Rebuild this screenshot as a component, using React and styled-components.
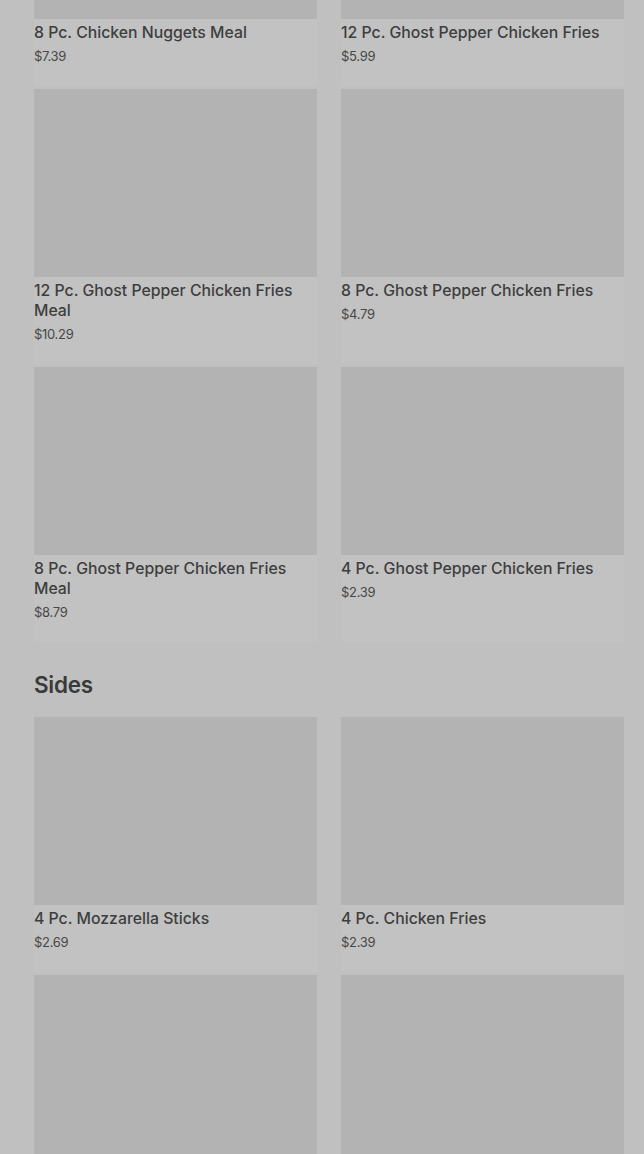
import React from 'react'
import styled, { createGlobalStyle } from 'styled-components'

const Global = createGlobalStyle`
    html, body {
        margin:0;
        padding:0;
        background:#c0c0c0;
        font-family:Inter, "Noto Sans", sans-serif;
        overflow:hidden;
    }
`

const Page = styled.div`
    width:644px;
    height:1154px;
    overflow:hidden;
    background:#c0c0c0;
`

// page is scrolled part way down the menu
const Scroller = styled.div`
    margin-top:-169px;
    padding:0 20px 0 34px;
`

const Section = styled.section`
    display:flex;
    flex-direction:column;
`

const Heading = styled.h2`
    margin:27px 0 16px;
    font-size:22.5px;
    line-height:32px;
    font-weight:600;
    letter-spacing:-0.3px;
    color:#3a3a3a;
`

const Grid = styled.div`
    display:grid;
    grid-template-columns:283px 283px;
    column-gap:24px;
    row-gap:3px;
`

const Card = styled.div`
    display:flex;
    flex-direction:column;
    background:#c2c2c2;
    padding-bottom:20px;
`

const Thumb = styled.div`
    height:188px;
    background:#b3b3b3;
`

const Name = styled.div`
    margin-top:4px;
    font-size:15.8px;
    line-height:20px;
    font-weight:500;
    color:#3e3e3e;
`

const Price = styled.div`
    margin-top:3px;
    font-size:13px;
    line-height:20px;
    letter-spacing:-0.3px;
    color:#484848;
`

const sections = [
    {
        title: null,
        items: [
            ['8 Pc. Chicken Nuggets Meal', '$7.39'],
            ['12 Pc. Ghost Pepper Chicken Fries', '$5.99'],
            ['12 Pc. Ghost Pepper Chicken Fries Meal', '$10.29'],
            ['8 Pc. Ghost Pepper Chicken Fries', '$4.79'],
            ['8 Pc. Ghost Pepper Chicken Fries Meal', '$8.79'],
            ['4 Pc. Ghost Pepper Chicken Fries', '$2.39'],
        ],
    },
    {
        title: 'Sides',
        items: [
            ['4 Pc. Mozzarella Sticks', '$2.69'],
            ['4 Pc. Chicken Fries', '$2.39'],
            ['Small French Fries', '$1.89'],
            ['Medium French Fries', '$2.29'],
        ],
    },
]

function App() {
    return (
        <Page>
            <Global />
            <Scroller>
                {sections.map((s, i) => (
                    <Section key={i}>
                        {s.title && <Heading>{s.title}</Heading>}
                        <Grid>
                            {s.items.map(([name, price]) => (
                                <Card key={name}>
                                    <Thumb />
                                    <Name>{name}</Name>
                                    <Price>{price}</Price>
                                </Card>
                            ))}
                        </Grid>
                    </Section>
                ))}
            </Scroller>
        </Page>
    )
}

export default App
